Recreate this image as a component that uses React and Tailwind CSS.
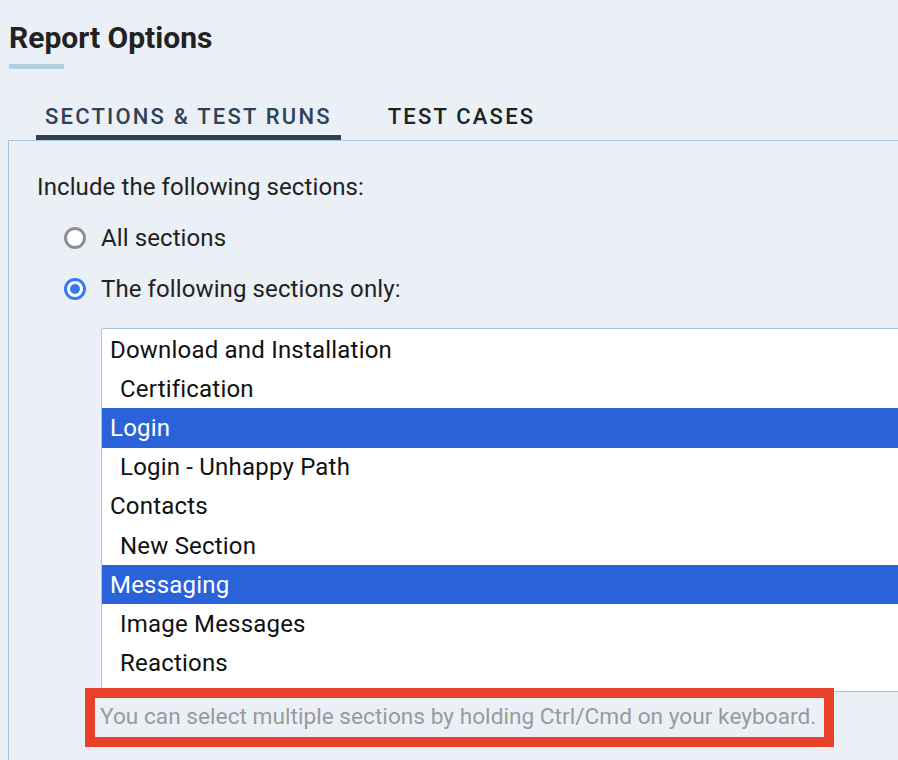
import React from 'react';

const sections = [
    { name: 'Download and Installation', depth: 0 },
    { name: 'Certification', depth: 1 },
    { name: 'Login', depth: 0, selected: true },
    { name: 'Login - Unhappy Path', depth: 1 },
    { name: 'Contacts', depth: 0 },
    { name: 'New Section', depth: 1 },
    { name: 'Messaging', depth: 0, selected: true },
    { name: 'Image Messages', depth: 1 },
    { name: 'Reactions', depth: 1 },
];

function Radio({ checked, label }) {
    return (
        <label className="flex items-center h-[26px]">
            {checked ? (
                <span className="w-[22px] h-[22px] rounded-full border-[3px] border-[#3478f6] bg-white flex items-center justify-center">
                    <span className="w-[10px] h-[10px] rounded-full bg-[#3478f6]"></span>
                </span>
            ) : (
                <span className="w-[22px] h-[22px] rounded-full border-[3px] border-[#8e8e93] bg-white"></span>
            )}
            <span className="ml-[15px] text-[24px] tracking-[0.1px] text-[#222]">{label}</span>
        </label>
    );
}

export default function App() {
    return (
        <div className="min-h-screen h-[760px] overflow-hidden bg-[#ebf0f7] font-['Roboto',sans-serif]">
            <div className="pl-[9px] pt-[20px]">
                <h1 className="text-[30px] leading-[36px] font-bold text-[#222]">Report Options</h1>
                <div className="mt-[8px] w-[55px] h-[5px] bg-[#b5cde0]"></div>
            </div>

            <div className="flex pl-[36px] mt-[34px]">
                <div className="px-[9px] pb-[4px] border-b-[5px] border-[#2d4256] text-[22px] leading-[28px] font-medium tracking-[2.2px] text-[#2d4358]">
                    SECTIONS &amp; TEST RUNS
                </div>
                <div className="ml-[38px] px-[9px] pb-[4px] text-[22px] leading-[28px] font-medium tracking-[2.2px] text-[#222]">
                    TEST CASES
                </div>
            </div>

            <div className="ml-[8px] mr-[-40px] border border-[#a9c6de] h-[700px]">
                <p className="pl-[28px] pt-[33px] text-[24px] leading-[26px] tracking-[0.1px] text-[#222]">Include the following sections:</p>
                <div className="pl-[55px] mt-[25px] flex flex-col gap-[25px]">
                    <Radio label="All sections" />
                    <Radio checked label="The following sections only:" />
                </div>

                <div className="ml-[92px] mt-[26px] bg-white border border-[#a9c6de] rounded-[2px] pt-[1px] pb-[8px]">
                    {sections.map((s) => (
                        <div
                            key={s.name}
                            className={
                                'h-[39.2px] flex items-center text-[24px] tracking-[0.2px] ' +
                                (s.selected ? 'bg-[#2962d9] text-white' : 'text-[#111]') +
                                (s.depth ? ' pl-[18px]' : ' pl-[8px]')
                            }
                        >
                            {s.name}
                        </div>
                    ))}
                </div>

                <div className="relative z-10 ml-[76px] -mt-[4px] w-[749px] h-[59px] border-[10px] border-[#e8402a] flex items-center pl-[5px]">
                    <span className="text-[22.7px] text-[#9a9a9a] whitespace-nowrap">
                        You can select multiple sections by holding Ctrl/Cmd on your keyboard.
                    </span>
                </div>
            </div>
        </div>
    );
}
